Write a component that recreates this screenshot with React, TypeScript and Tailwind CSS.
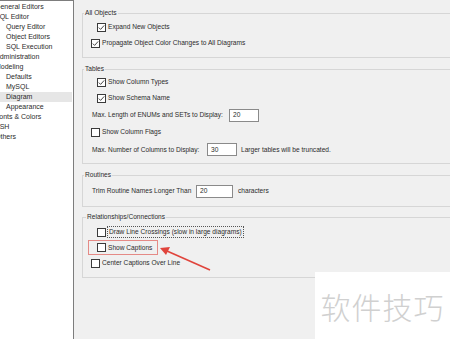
import React from "react";

const font = { fontFamily: '"Liberation Sans", Arial, sans-serif' };

function Box({ checked }: { checked?: boolean }) {
  return (
    <svg width="9" height="9" viewBox="0 0 9 9" className="shrink-0 block">
      <rect x="0.5" y="0.5" width="8" height="8" fill="#fff" stroke="#3a3a3a" />
      {checked && (
        <polyline points="1.8,4.6 3.6,6.4 7.2,2.4" fill="none" stroke="#333" strokeWidth="0.9" />
      )}
    </svg>
  );
}

function Check({ label, checked, indent }: { label: string; checked?: boolean; indent: "in" | "out" }) {
  return (
    <div className={`flex items-center h-[16px] ${indent === "in" ? "ml-[14px]" : "ml-[8px]"}`}>
      <Box checked={checked} />
      <span className="ml-[2px] whitespace-nowrap">{label}</span>
    </div>
  );
}

function Input({ value, w }: { value: string; w: string }) {
  return (
    <div className={`h-[13px] bg-white border border-[#8a8a8a] flex items-center pl-[3px] shrink-0 ${w}`}>
      {value}
    </div>
  );
}

const tree: [string, number, boolean?][] = [
  ["General Editors", 0],
  ["SQL Editor", 0],
  ["Query Editor", 1],
  ["Object Editors", 1],
  ["SQL Execution", 1],
  ["Administration", 0],
  ["Modeling", 0],
  ["Defaults", 1],
  ["MySQL", 1],
  ["Diagram", 1, true],
  ["Appearance", 1],
  ["Fonts & Colors", 0],
  ["SSH", 0],
  ["Others", 0],
];

export default function App() {
  return (
    <div
      className="relative w-[450px] h-[339px] overflow-hidden bg-[#f0f0f0] flex leading-[10px] text-[#2b2b2b]"
      style={font}
    >
      {/* tree */}
      <div className="w-[74px] shrink-0 h-full bg-white border-r border-t border-[#7d7d7d] pt-[1px] overflow-hidden text-[7px]">
        {tree.map(([t, lvl, sel]) => (
          <div key={t} className={`h-[10px] flex items-center w-[72px] ${sel ? "bg-[#e6e6e6]" : ""}`}>
            <span className={`whitespace-nowrap ${lvl === 0 ? "ml-[-5px]" : "ml-[6px]"}`}>{t}</span>
          </div>
        ))}
      </div>

      {/* settings */}
      <div className="flex-1 min-w-0 pl-[8px] text-[6.6px]">
        <fieldset className="w-[380px] mt-[8px] border border-[#d6d6d6] pt-[1px] pb-[6px] px-0 m-0">
          <legend className="ml-[1px] px-[1px] leading-[10px]">All Objects</legend>
          <Check label="Expand New Objects" checked indent="in" />
          <Check label="Propagate Object Color Changes to All Diagrams" checked indent="out" />
        </fieldset>

        <fieldset className="w-[380px] mt-[6px] border border-[#d6d6d6] pb-[4px] px-0">
          <legend className="ml-[1px] px-[1px] leading-[10px]">Tables</legend>
          <Check label="Show Column Types" checked indent="in" />
          <Check label="Show Schema Name" checked indent="in" />
          <div className="flex items-center h-[18px] ml-[9px]">
            <span className="w-[137px] whitespace-nowrap">Max. Length of ENUMs and SETs to Display:</span>
            <Input value="20" w="w-[30px]" />
          </div>
          <Check label="Show Column Flags" indent="out" />
          <div className="flex items-center h-[19px] ml-[9px]">
            <span className="w-[115px] whitespace-nowrap">Max. Number of Columns to Display:</span>
            <Input value="30" w="w-[30px]" />
            <span className="ml-[4px] whitespace-nowrap">Larger tables will be truncated.</span>
          </div>
        </fieldset>

        <fieldset className="w-[380px] mt-[6px] border border-[#d6d6d6] pb-[4px] px-0">
          <legend className="ml-[1px] px-[1px] leading-[10px]">Routines</legend>
          <div className="flex items-center h-[22px] ml-[9px]">
            <span className="w-[104px] whitespace-nowrap">Trim Routine Names Longer Than</span>
            <Input value="20" w="w-[37px]" />
            <span className="ml-[5px] whitespace-nowrap">characters</span>
          </div>
        </fieldset>

        <fieldset className="w-[380px] mt-[5px] border border-[#d6d6d6] pt-[2px] pb-[6px] px-0">
          <legend className="ml-[3px] px-[1px] leading-[10px]">Relationships/Connections</legend>
          <div className="flex items-center h-[16px] ml-[14px]">
            <Box />
            <span className="ml-[1px] px-[1px] leading-[10px] border border-dotted border-[#555] whitespace-nowrap">
              Draw Line Crossings (slow in large diagrams)
            </span>
          </div>
          <div className="flex items-center h-[15px] w-[70px] ml-[5px] border border-[#e58a86] pl-[8px]">
            <Box />
            <span className="ml-[2px] whitespace-nowrap">Show Captions</span>
          </div>
          <Check label="Center Captions Over Line" indent="out" />
        </fieldset>
      </div>

      {/* annotation arrow */}
      <svg className="absolute left-0 top-0 pointer-events-none" width="450" height="339">
        <line x1="210" y1="270" x2="167" y2="251" stroke="#e0443c" strokeWidth="1.6" />
        <polygon points="160,248 170,247 166,255" fill="#e0443c" />
      </svg>

      {/* watermark */}
      <div className="absolute left-[315px] top-[272px] w-[135px] h-[67px] bg-white flex items-center justify-center">
        <span
          className="text-[30px] leading-none text-[#d0d0d0] tracking-[1px]"
          style={{ fontFamily: '"Noto Sans CJK SC", sans-serif', fontWeight: 300 }}
        >
          软件技巧
        </span>
      </div>
    </div>
  );
}
